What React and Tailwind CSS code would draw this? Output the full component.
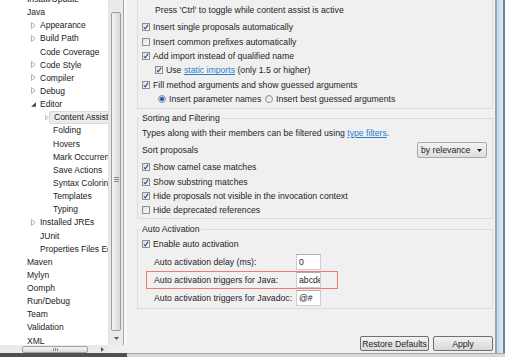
import React from 'react'

const tree = [
  { t: 'Install/Update', l: 0 },
  { t: 'Java', l: 0 },
  { t: 'Appearance', l: 1, a: 'c' },
  { t: 'Build Path', l: 1, a: 'c' },
  { t: 'Code Coverage', l: 1 },
  { t: 'Code Style', l: 1, a: 'c' },
  { t: 'Compiler', l: 1, a: 'c' },
  { t: 'Debug', l: 1, a: 'c' },
  { t: 'Editor', l: 1, a: 'o' },
  { t: 'Content Assist', l: 2, a: 'c', sel: true },
  { t: 'Folding', l: 2 },
  { t: 'Hovers', l: 2 },
  { t: 'Mark Occurrences', l: 2 },
  { t: 'Save Actions', l: 2 },
  { t: 'Syntax Coloring', l: 2 },
  { t: 'Templates', l: 2 },
  { t: 'Typing', l: 2 },
  { t: 'Installed JREs', l: 1, a: 'c' },
  { t: 'JUnit', l: 1 },
  { t: 'Properties Files Editor', l: 1 },
  { t: 'Maven', l: 0 },
  { t: 'Mylyn', l: 0 },
  { t: 'Oomph', l: 0 },
  { t: 'Run/Debug', l: 0 },
  { t: 'Team', l: 0 },
  { t: 'Validation', l: 0 },
  { t: 'XML', l: 0 },
]

function Arrow({ a }) {
  if (a === 'o')
    return (
      <svg width="5" height="5" viewBox="0 0 5 5">
        <path d="M4.8 0.2 L4.8 4.8 L0.2 4.8 Z" fill="#3c3c3c" />
      </svg>
    )
  if (a === 'c')
    return (
      <svg width="5" height="7" viewBox="0 0 5 7">
        <path d="M0.5 0.5 L4.2 3.5 L0.5 6.5 Z" fill="none" stroke="#a8a8a8" strokeWidth="0.9" />
      </svg>
    )
  return null
}

function TreeRow({ item }) {
  const pad = item.l === 0 ? 'pl-[27px]' : item.l === 1 ? 'pl-[31px]' : 'pl-[45px]'
  return (
    <div className={`h-[13.15px] flex items-center whitespace-nowrap ${pad}`}>
      {item.l > 0 && (
        <span className={`flex items-center shrink-0 ${item.l === 1 ? 'w-[9px]' : 'w-[4px]'}`}>
          <Arrow a={item.a} />
        </span>
      )}
      {item.sel ? (
        <span className="h-[13px] flex items-center pl-[4px] pr-[2px] bg-[#ececec] border border-[#dadada] rounded-[2px]">{item.t}</span>
      ) : (
        <span className={item.l === 2 ? 'pl-[4px]' : ''}>{item.t}</span>
      )}
    </div>
  )
}

function Check({ on }) {
  return (
    <span className="w-[8px] h-[8px] shrink-0 border border-[#8e8f8f] bg-linear-to-br from-[#dcdcdc] to-[#fbfbfb] flex items-center justify-center">
      {on && (
        <svg width="6" height="6" viewBox="0 0 6 6">
          <path d="M0.9 3.3 L2.3 4.9 L5.2 0.6" fill="none" stroke="#2c4f9e" strokeWidth="1.1" />
        </svg>
      )}
    </span>
  )
}

function Radio({ on }) {
  return (
    <span className="w-[8px] h-[8px] shrink-0 rounded-full border border-[#8e8f8f] bg-linear-to-br from-[#dedede] to-[#fbfbfb] flex items-center justify-center">
      {on && <span className="w-[4px] h-[4px] rounded-full bg-[#2d5aa6] shadow-[0_0_1px_1px_#9cc3ea]" />}
    </span>
  )
}

function CheckRow({ on, children, indent }) {
  return (
    <div className={`h-[14.4px] flex items-center gap-[3px] whitespace-nowrap ${indent ? 'pl-[13px]' : ''}`}>
      <Check on={on} />
      <span>{children}</span>
    </div>
  )
}

const Link = ({ children }) => <span className="text-[#2e7ed0] underline underline-offset-1">{children}</span>

function Field({ label, value, marked }) {
  return (
    <div className={`h-[18px] w-[192px] flex items-center ${marked ? 'outline outline-[#ee7a7a] -outline-offset-1' : ''}`}>
      <span className="w-[150px] pl-[8px] whitespace-nowrap">{label}</span>
      <span className="w-[25px] h-[16px] bg-white border border-[#c9ced6] border-t-[#abadb3] pl-[2px] flex items-center overflow-hidden whitespace-nowrap">
        {value}
      </span>
    </div>
  )
}

function LeftPane() {
  return (
    <div className="w-[127px] flex flex-col shrink-0">
      <div className="flex h-[345px]">
        <div className="w-[108px] bg-white overflow-hidden text-[8.5px] leading-[12px] text-[#1a1a1a]">
          <div className="-mt-[7.6px]">
            {tree.map((it) => (
              <TreeRow key={it.t} item={it} />
            ))}
          </div>
        </div>
        <div className="w-[15px] bg-[#eaeaea] flex flex-col pt-[12px] border-l border-[#e2e2e2]">
          <div className="flex-1 mx-[2px] rounded-[2px] border border-[#9c9c9c] bg-linear-to-r from-[#f4f4f4] to-[#d9d9d9] flex flex-col items-center pt-[164px]">
            <span className="w-[5px] h-[1px] bg-[#8a8a8a]" />
            <span className="w-[5px] h-[1px] bg-[#8a8a8a] mt-[1px]" />
            <span className="w-[5px] h-[1px] bg-[#8a8a8a] mt-[1px]" />
          </div>
          <div className="h-[14px] flex items-center justify-center">
            <svg width="5" height="3" viewBox="0 0 5 3">
              <path d="M0 0 L5 0 L2.5 3 Z" fill="#5a5a5a" />
            </svg>
          </div>
        </div>
        <div className="w-[1px] bg-[#a8a8a8]" />
        <div className="w-[3px] bg-[#f8f8f8]" />
      </div>
      <div className="flex h-[8px]">
        <div className="w-[108px] bg-[#eaeaea] flex items-center">
          <div className="ml-[22px] w-[66px] h-[7px] rounded-[2px] border border-[#a2a2a2] bg-linear-to-b from-[#f4f4f4] to-[#dadada] flex items-center justify-center gap-[1px]">
            <span className="w-[1px] h-[3px] bg-[#8a8a8a]" />
            <span className="w-[1px] h-[3px] bg-[#8a8a8a]" />
            <span className="w-[1px] h-[3px] bg-[#8a8a8a]" />
          </div>
          <svg className="ml-[13px]" width="3" height="5" viewBox="0 0 3 5">
            <path d="M0 0 L3 2.5 L0 5 Z" fill="#5a5a5a" />
          </svg>
        </div>
        <div className="flex-1 bg-[#efefef]" />
      </div>
    </div>
  )
}

function RightPane() {
  return (
    <div className="flex-1 flex flex-col pl-[10px] pr-[2px] text-[8.7px] leading-[12px] text-[#1e1e1e]">
      <div className="h-[109px] border-x border-b border-[#d6dee4] pl-[4px] pt-[3px] flex flex-col">
        <div className="h-[14px] flex items-center pl-[13px] whitespace-nowrap">
          Press 'Ctrl' to toggle while content assist is active
        </div>
        <div className="mt-[3px]">
          <CheckRow on>Insert single proposals automatically</CheckRow>
          <CheckRow>Insert common prefixes automatically</CheckRow>
          <CheckRow on>Add import instead of qualified name</CheckRow>
          <CheckRow on indent>
            Use <Link>static imports</Link> (only 1.5 or higher)
          </CheckRow>
          <CheckRow on>Fill method arguments and show guessed arguments</CheckRow>
          <div className="h-[14.4px] flex items-center pl-[16px] whitespace-nowrap">
            <span className="w-[111px] flex items-center gap-[3px]">
              <Radio on />
              <span>Insert parameter names</span>
            </span>
            <span className="-ml-[4px] flex items-center gap-[3px]">
              <Radio />
              <span>Insert best guessed arguments</span>
            </span>
          </div>
        </div>
      </div>

      <fieldset className="mt-[3px] h-[107px] border border-[#d6dee4] px-[4px]">
        <legend className="-ml-[2px] px-[2px] leading-[12px]">Sorting and Filtering</legend>
        <div className="mt-[2px] h-[14px] flex items-center whitespace-nowrap">
          Types along with their members can be filtered using&nbsp;<Link>type filters</Link>.
        </div>
        <div className="mt-[2px] h-[16px] flex items-center justify-between">
          <span>Sort proposals</span>
          <span className="mr-[1px] w-[70px] h-[16px] border border-[#a9a9a9] rounded-[2px] bg-linear-to-b from-[#f2f2f2] to-[#dedede] flex items-center justify-between pl-[3px] pr-[4px]">
            <span>by relevance</span>
            <svg width="5" height="3" viewBox="0 0 5 3">
              <path d="M0 0 L5 0 L2.5 3 Z" fill="#1e1e1e" />
            </svg>
          </span>
        </div>
        <div className="mt-[2px]">
          <CheckRow on>Show camel case matches</CheckRow>
          <CheckRow on>Show substring matches</CheckRow>
          <CheckRow on>Hide proposals not visible in the invocation context</CheckRow>
          <CheckRow>Hide deprecated references</CheckRow>
        </div>
      </fieldset>

      <fieldset className="mt-[4px] h-[86px] border border-[#d6dee4] px-[4px]">
        <legend className="-ml-[2px] px-[2px] leading-[12px]">Auto Activation</legend>
        <div className="mt-[2px] h-[14px] flex items-center gap-[3px]">
          <Check on />
          <span>Enable auto activation</span>
        </div>
        <div className="mt-[2px] ml-[4px]">
          <Field label="Auto activation delay (ms):" value="0" />
          <Field label="Auto activation triggers for Java:" value="abcdefghijklmnopqrstuvwxyz" marked />
          <Field label="Auto activation triggers for Javadoc:" value="@#" />
        </div>
      </fieldset>

      <div className="mt-[27px] flex justify-end gap-[4px]">
        <button className="w-[69px] h-[15px] border border-[#707070] rounded-[2px] bg-linear-to-b from-[#f3f3f3] to-[#d8d8d8] flex items-center justify-center">
          Restore Defaults
        </button>
        <button className="w-[60px] h-[15px] border border-[#707070] rounded-[2px] bg-linear-to-b from-[#f3f3f3] to-[#d8d8d8] flex items-center justify-center">
          Apply
        </button>
      </div>
    </div>
  )
}

export default function App() {
  return (
    <div className="w-[505px] h-[357px] overflow-hidden flex flex-col bg-[#f0f0f0] font-['Liberation_Sans',Arial,sans-serif]">
      <div className="flex h-[353px]">
        <LeftPane />
        <RightPane />
        <div className="w-[10px] flex">
          <div className="w-[2px] bg-[#9aa4ad]" />
          <div className="flex-1 bg-linear-to-r from-[#bcd8ef] to-[#d9ebf8]" />
          <div className="w-[2px] bg-[#6f8090]" />
        </div>
      </div>
      <div className="flex h-[4px]">
        <div className="w-[127px] bg-[#505050]" />
        <div className="flex-1 bg-[#d8d8d8] border-t border-[#a9a9a9]" />
      </div>
    </div>
  )
}
